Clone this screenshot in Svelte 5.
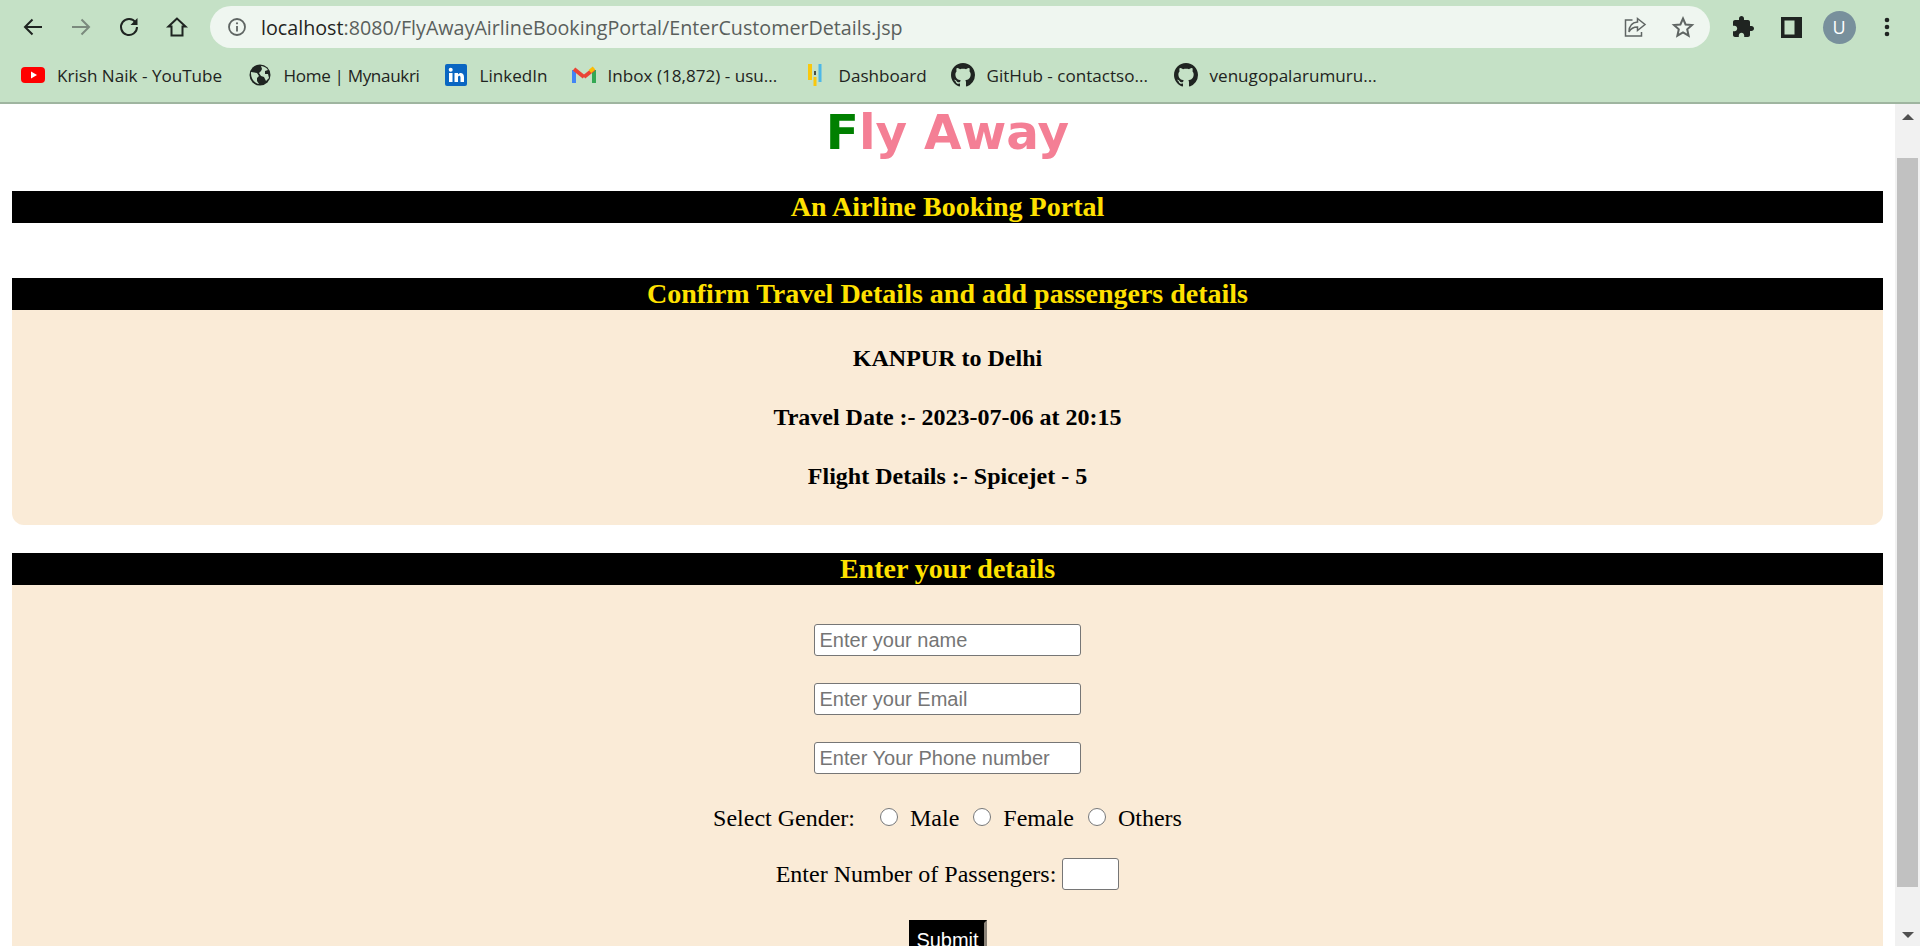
<script>
  // w: label slot width, so the bookmarks keep their place in the bar
  const bookmarks = [
    { label: "Krish Naik - YouTube", icon: "yt", w: 165.5 },
    { label: "Home | Mynaukri", icon: "globe", w: 135, tight: true },
    { label: "LinkedIn", icon: "in", w: 67 },
    { label: "Inbox (18,872) - usu...", icon: "gmail", w: 170 },
    { label: "Dashboard", icon: "dash", w: 87 },
    { label: "GitHub - contactso...", icon: "gh", w: 162 },
    { label: "venugopalarumuru...", icon: "gh", w: 165 }
  ];
  const ghPath =
    "M8 0C3.58 0 0 3.58 0 8c0 3.54 2.29 6.53 5.47 7.59.4.07.55-.17.55-.38 0-.19-.01-.82-.01-1.49-2.01.37-2.53-.49-2.69-.94-.09-.23-.48-.94-.82-1.13-.28-.15-.68-.52-.01-.53.63-.01 1.08.58 1.23.82.72 1.21 1.87.87 2.33.66.07-.52.28-.87.51-1.07-1.78-.2-3.64-.89-3.64-3.95 0-.87.31-1.59.82-2.15-.08-.2-.36-1.02.08-2.12 0 0 .67-.21 2.2.82.64-.18 1.32-.27 2-.27.68 0 1.36.09 2 .27 1.53-1.04 2.2-.82 2.2-.82.44 1.1.16 1.92.08 2.12.51.56.82 1.27.82 2.15 0 3.07-1.87 3.75-3.65 3.95.29.25.54.73.54 1.48 0 1.07-.01 1.93-.01 2.2 0 .21.15.46.55.38A8.013 8.013 0 0016 8c0-4.42-3.58-8-8-8z";
</script>

<div class="window">
  <header class="chrome">
    <div class="toolbar">
      <button class="tool" aria-label="Back">
        <svg width="24" height="24" viewBox="0 0 24 24" fill="none" stroke="#1f2421" stroke-width="2"><path d="M21 12H4M11.5 4.5 4 12l7.5 7.5" /></svg>
      </button>
      <button class="tool" aria-label="Forward">
        <svg width="24" height="24" viewBox="0 0 24 24" fill="none" stroke="#7b8a7d" stroke-width="2"><path d="M3 12h17M12.5 4.5 20 12l-7.5 7.5" /></svg>
      </button>
      <button class="tool" aria-label="Reload">
        <svg width="24" height="24" viewBox="0 0 24 24" fill="none"><path d="M18.6 7.5A8 8 0 1 0 20 12" stroke="#1f2421" stroke-width="2" /><path d="M20.5 3v7h-7z" fill="#1f2421" /></svg>
      </button>
      <button class="tool" aria-label="Home">
        <svg width="24" height="24" viewBox="0 0 24 24" fill="none" stroke="#1f2421" stroke-width="2"><path d="M12 3.5 3.5 11.5H6.5V20.500H17.500V11.500H20.500Z" /></svg>
      </button>
      <div class="omnibox">
        <svg class="info" width="20" height="20" viewBox="0 0 20 20" fill="none"><circle cx="10" cy="10" r="8" stroke="#5f6563" stroke-width="1.8" /><path d="M10 9v5.500" stroke="#5f6563" stroke-width="1.800" /><circle cx="10" cy="6.300" r="1.100" fill="#5f6563" /></svg>
        <span class="url"><span class="host">localhost</span>:8080/FlyAwayAirlineBookingPortal/EnterCustomerDetails.jsp</span>
        <svg class="share" width="24" height="24" viewBox="0 0 24 24" fill="none" stroke="#5f6563" stroke-width="1.500"><path d="M9.500 5H2.500V21H18.500V17" /><path d="M14.500 3.500 22 9.500 14.500 15.500V12C10 12 7.500 14 6 17 6 11.500 9 7.500 14.500 7Z" /></svg>
        <svg class="star" width="24" height="24" viewBox="0 0 24 24" fill="none" stroke="#5f6563" stroke-width="2"><path d="M12 3.500 14.600 9.500 21 10 16.200 14.300 17.600 20.700 12 17.300 6.400 20.700 7.800 14.300 3 10 9.400 9.500Z" /></svg>
      </div>
      <button class="tool first-ext" aria-label="Extensions">
        <svg width="24" height="24" viewBox="0 0 24 24" fill="#1f2421"><path d="M20.5 11H19V7c0-1.100-.9-2-2-2h-4V3.500C13 2.120 11.880 1 10.500 1S8 2.120 8 3.500V5H4c-1.100 0-1.990.9-1.990 2v3.800H3.500c1.490 0 2.700 1.210 2.700 2.700s-1.210 2.700-2.700 2.700H2V20c0 1.100.9 2 2 2h3.800v-1.500c0-1.490 1.210-2.700 2.700-2.700 1.490 0 2.700 1.210 2.700 2.700V22H17c1.100 0 2-.9 2-2v-4h1.500c1.380 0 2.500-1.120 2.500-2.500S21.880 11 20.500 11z" /></svg>
      </button>
      <button class="tool" aria-label="Side panel">
        <svg width="24" height="24" viewBox="0 0 24 24" fill="none"><rect x="2" y="2" width="21" height="21" fill="#1f2421" /><rect x="5.500" y="5.500" width="10" height="14" fill="#c5e1c6" /></svg>
      </button>
      <button class="tool" aria-label="Profile"><span class="avatar">U</span></button>
      <button class="tool" aria-label="Menu">
        <svg width="24" height="24" viewBox="0 0 24 24" fill="#1f2421"><circle cx="12" cy="5" r="2.300" /><circle cx="12" cy="12" r="2.300" /><circle cx="12" cy="19" r="2.300" /></svg>
      </button>
    </div>

    <nav class="bookmarks">
      {#each bookmarks as b}
        <div class="bookmark">
          {#if b.icon === "yt"}
            <svg width="24" height="24" viewBox="0 0 24 24"><rect x="0" y="4" width="24" height="16" rx="4" fill="#f00" /><path d="M10 8.500 16 12l-6 3.500z" fill="#fff" /></svg>
          {:else if b.icon === "globe"}
            <svg width="24" height="24" viewBox="0 0 24 24"><circle cx="12" cy="12" r="10.500" fill="#1f2421" /><path d="M3 9l6 1 2 3-2 2v3l2 3C6 20 2.500 15 3 9zM13 3c2 0 5 1 7 4l-3 1v3h3l1 4-3 3-2-4-3-1-2-3 2-2 1-2z" fill="#c5e1c6" /></svg>
          {:else if b.icon === "in"}
            <svg width="24" height="24" viewBox="0 0 24 24"><rect x="1" y="1" width="22" height="22" rx="2" fill="#0a66c2" /><rect x="5" y="10" width="3.500" height="9" fill="#fff" /><circle cx="6.700" cy="6.800" r="2" fill="#fff" /><path d="M10.500 10H14v1.500c1.500-2.500 6-2.300 6 2.500v5h-3.500v-4.500c0-2.500-2.500-2.500-2.500 0V19h-3.500z" fill="#fff" /></svg>
          {:else if b.icon === "gmail"}
            <svg width="24" height="24" viewBox="0 0 24 24" fill="none"><path d="M2 20V7" stroke="#4285f4" stroke-width="4" /><path d="M22 20V7" stroke="#34a853" stroke-width="4" /><path d="M2 6l10 8" stroke="#ea4335" stroke-width="4" /><path d="M12 14 22 6" stroke="#ea4335" stroke-width="4" /><path d="M22 5 18 8.500" stroke="#fbbc04" stroke-width="4" /></svg>
          {:else if b.icon === "dash"}
            <svg width="24" height="24" viewBox="0 0 24 24"><rect x="5" y="1" width="4" height="16" fill="#f9c80e" /><rect x="10.500" y="14" width="3" height="9" fill="#f9c80e" /><rect x="11" y="8" width="2" height="4" fill="#4a4f46" /><rect x="15.500" y="1" width="3" height="18" fill="#4db8e8" /></svg>
          {:else}
            <svg width="24" height="24" viewBox="0 0 16 16"><path d={ghPath} fill="#1f2421" /></svg>
          {/if}
          <span class="label" class:tight={b.tight} style:width="{b.w}px">{b.label}</span>
        </div>
      {/each}
    </nav>
  </header>

  <div class="viewport">
    <main class="page">
      <h1><span class="f">F</span>ly Away</h1>
      <h3 class="bar">An Airline Booking Portal</h3>

      <section class="block travel">
        <h3 class="bar">Confirm Travel Details and add passengers details</h3>
        <div class="panel rounded">
          <h4>KANPUR to Delhi</h4>
          <h4>Travel Date :- 2023-07-06 at 20:15</h4>
          <h4>Flight Details :- Spicejet - 5</h4>
        </div>
      </section>

      <section class="block">
        <h3 class="bar">Enter your details</h3>
        <form class="panel details">
          <input type="text" placeholder="Enter your name" />
          <input type="text" placeholder="Enter your Email" />
          <input type="text" placeholder="Enter Your Phone number" />
          <div class="row gender">
            <span class="lead">Select Gender:</span>
            <label><input type="radio" name="gender" /> Male</label>
            <label><input type="radio" name="gender" /> Female</label>
            <label><input type="radio" name="gender" /> Others</label>
          </div>
          <div class="row">
            <label for="pax">Enter Number of Passengers:</label>
            <input id="pax" class="count" type="text" />
          </div>
          <button class="submit" type="button">Submit</button>
        </form>
      </section>
    </main>

    <div class="scrollbar">
      <span class="arrow up"></span>
      <span class="thumb"></span>
      <span class="arrow down"></span>
    </div>
  </div>
</div>

<style>
  :global(body) {
    margin: 0;
    background: #fff;
  }

  .window {
    height: 946px;
    display: flex;
    flex-direction: column;
    overflow: hidden;
  }

  /* Browser frame */
  .chrome {
    height: 102px;
    flex: none;
    background: #c5e1c6;
    border-bottom: 2px solid #9fb5a0;
    font-family: "Open Sans", "Noto Sans", sans-serif;
  }

  .toolbar {
    height: 54px;
    padding: 0 9px;
    display: flex;
    align-items: center;
  }

  .tool {
    width: 48px;
    height: 42px;
    flex: none;
    padding: 0;
    border: 0;
    background: none;
    display: flex;
    align-items: center;
    justify-content: center;
  }

  .first-ext {
    margin-left: 9px;
  }

  .omnibox {
    flex: 1;
    height: 42px;
    margin-left: 9px;
    padding: 0 12px 0 17px;
    box-sizing: border-box;
    display: flex;
    align-items: center;
    background: #eff6f0;
    border-radius: 21px;
  }

  .url {
    flex: 1;
    margin-left: 14px;
    font-size: 19.7px;
    color: #5a605c;
    white-space: nowrap;
  }

  .host {
    color: #1f2421;
  }

  .share {
    margin-right: 24px;
  }

  .star {
    margin-right: 3px;
  }

  .avatar {
    width: 33px;
    height: 33px;
    border-radius: 50%;
    background: #78909c;
    color: #fff;
    font: 18px "Open Sans", sans-serif;
    line-height: 33px;
    text-align: center;
  }

  .bookmarks {
    height: 42px;
    padding-left: 21px;
    display: flex;
    align-items: center;
    gap: 25px;
    font-size: 17.100px;
    color: #1f2421;
  }

  .bookmark {
    display: flex;
    align-items: center;
    gap: 12px;
    white-space: nowrap;
  }

  .label {
    flex: none;
  }

  .tight {
    letter-spacing: -0.35px;
  }

  /* Page viewport */
  .viewport {
    flex: 1;
    display: flex;
    min-height: 0;
    overflow: hidden;
  }

  .page {
    flex: 1;
    min-width: 0;
    padding: 0 12px;
    text-align: center;
    font-family: "Liberation Serif", serif;
    font-size: 24px;
    color: #000;
  }

  h1 {
    margin: 0 0 31px;
    font: bold 48.5px/56px "DejaVu Sans", sans-serif;
    color: #f47f95;
  }

  .f {
    color: #008000;
  }

  .bar {
    margin: 0;
    height: 32px;
    background: #000;
    color: #ffe100;
    font-size: 28px;
    line-height: 32px;
  }

  .block {
    margin-top: 28px;
  }

  .travel {
    margin-top: 55px;
  }

  .panel {
    background: #faebd7;
  }

  .rounded {
    padding: 35px 0 35px;
    border-radius: 0 0 12px 12px;
  }

  h4 {
    margin: 0 0 32px;
    font-size: 24px;
    line-height: 27px;
  }

  h4:last-child {
    margin-bottom: 0;
  }

  .details {
    padding: 39px 0 40px;
    display: flex;
    flex-direction: column;
    align-items: center;
    gap: 27px;
  }

  input[type="text"] {
    width: 267px;
    height: 32px;
    box-sizing: border-box;
    margin: 0;
    padding: 1px 4.5px;
    border: 1.5px solid #767676;
    border-radius: 3px;
    background: #fff;
    font: 20px "Liberation Sans", Arial, sans-serif;
  }

  input::placeholder {
    color: #757575;
  }

  .row {
    display: flex;
    align-items: center;
    gap: 6px;
    height: 32px;
  }

  .gender {
    gap: 14px;
    margin: 1px 0 -3px;
  }

  .gender .lead {
    margin-right: 11px;
  }

  .gender label {
    display: flex;
    align-items: center;
    gap: 12px;
  }

  input[type="radio"] {
    width: 18px;
    height: 18px;
    margin: -3px 0 0;
  }

  input.count {
    width: 57px;
  }

  .submit {
    width: 78px;
    height: 40px;
    padding: 0;
    margin-top: 3px;
    border: 3px solid #000;
    border-right-color: #8b8378;
    border-bottom-color: #8b8378;
    background: #000;
    color: #fff;
    font: 20px "Liberation Sans", Arial, sans-serif;
  }

  /* Scrollbar */
  .scrollbar {
    width: 25px;
    flex: none;
    position: relative;
    background: #f1f1f1;
  }

  .thumb {
    position: absolute;
    top: 54px;
    left: 2px;
    width: 21px;
    height: 729px;
    background: #c1c1c1;
  }

  .arrow {
    position: absolute;
    left: 7px;
    border-left: 6px solid transparent;
    border-right: 6px solid transparent;
  }

  .up {
    top: 10px;
    border-bottom: 6px solid #505050;
  }

  .down {
    bottom: 8px;
    border-top: 6px solid #505050;
  }
</style>
